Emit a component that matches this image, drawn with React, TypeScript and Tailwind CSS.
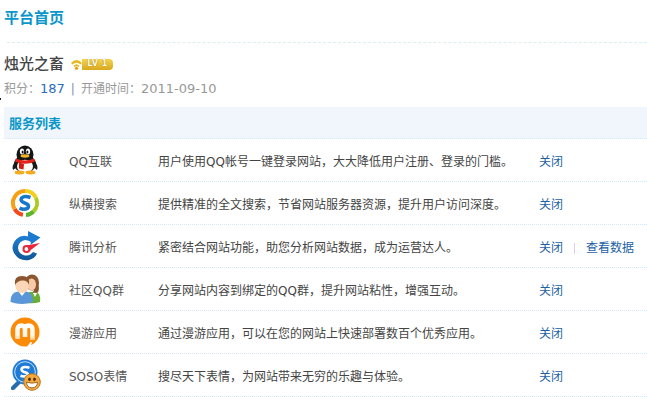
import React from 'react'

const FONT = "font-['DejaVu_Sans','Noto_Sans_CJK_SC',sans-serif]"

function QQIcon() {
  return (
    <svg width="32" height="32" viewBox="0 0 32 32">
      <ellipse cx="16" cy="20" rx="11" ry="9" fill="#1a1a1a" />
      <path d="M6 18 Q2.5 22 4 26 L8 23Z" fill="#1a1a1a" />
      <path d="M26 18 Q29.5 22 28 26 L24 23Z" fill="#1a1a1a" />
      <ellipse cx="16" cy="10.5" rx="8.5" ry="9" fill="#151515" />
      <ellipse cx="16" cy="22.5" rx="8" ry="6.8" fill="#fbfbf8" />
      <ellipse cx="13" cy="7.5" rx="2.1" ry="3" fill="#fff" />
      <ellipse cx="19" cy="7.5" rx="2.1" ry="3" fill="#fff" />
      <ellipse cx="13.6" cy="8" rx="1" ry="1.5" fill="#111" />
      <ellipse cx="18.4" cy="8" rx="1" ry="1.5" fill="#111" />
      <ellipse cx="16" cy="12" rx="4.4" ry="1.7" fill="#f4b41e" />
      <path d="M7 14.5 Q16 18.5 25 14.5 L26 17.5 Q16 22 6 17.5Z" fill="#e2231a" />
      <path d="M10 18.5 L15 20 L14.5 25.5 L10 24.5Z" fill="#d41c14" />
      <ellipse cx="10.5" cy="28.5" rx="5" ry="1.9" fill="#f5a91d" />
      <ellipse cx="21.5" cy="28.5" rx="5" ry="1.9" fill="#f5a91d" />
    </svg>
  )
}

function SearchIcon() {
  return (
    <svg width="32" height="32" viewBox="0 0 32 32" fill="none">
      <circle cx="16" cy="16" r="13.7" fill="#fff" />
      <path d="M16 4 A12 12 0 0 1 27 11" stroke="#f2cf1e" strokeWidth="4" />
      <path d="M27 11 A12 12 0 0 1 24.5 24.5" stroke="#a9cc22" strokeWidth="4" />
      <path d="M24.5 24.5 A12 12 0 0 1 17 28" stroke="#5bb52a" strokeWidth="4" />
      <path d="M14 27.8 A12 12 0 0 1 5.6 22" stroke="#ef4a1c" strokeWidth="4" />
      <path d="M5.6 22 A12 12 0 0 1 16 4" stroke="#f7a014" strokeWidth="4" />
      <path d="M21.5 10.5 Q15.5 8.5 12.8 10.8 Q10.8 13.3 14 15.2 L18 17 Q20.8 19 18.4 21.4 Q15 23.3 10.5 21.2" stroke="#1778c9" strokeWidth="3.6" />
    </svg>
  )
}

function AnalyticsIcon() {
  return (
    <svg width="32" height="32" viewBox="0 0 32 32" fill="none">
      <defs>
        <linearGradient id="analytics-c" x1="0" y1="0" x2="0" y2="1">
          <stop offset="0" stopColor="#1f7fd4" />
          <stop offset="1" stopColor="#0f5797" />
        </linearGradient>
      </defs>
      <path d="M22 8 Q14 3 7.5 9 Q1 16 5 23 Q10 31.5 20 30 Q26 28.5 28 23.5 L24 22 Q21 26 16 25.5 Q9.5 24 9 18 Q9.5 11 16 10 Q19 10 22 12Z" fill="url(#analytics-c)" />
      <path d="M19 1 L31.5 7.5 L21.5 15 L22 11 L19 7Z" fill="#1c7bd0" />
      <circle cx="17.5" cy="19" r="3" stroke="#e8283c" strokeWidth="2" />
      <path d="M17.5 15.5 L31 13 L20.5 21Z" fill="#e8283c" />
      <circle cx="17.5" cy="19" r="1.3" fill="#fff" />
    </svg>
  )
}

function GroupIcon() {
  return (
    <svg width="32" height="32" viewBox="0 0 32 32">
      <path d="M18 30 L18 20 Q25 17 30 21 Q32 25 31 29 Q25 31 18 30Z" fill="#6aae36" />
      <path d="M24 20 L26 24 L28 20Z" fill="#fff" />
      <ellipse cx="23" cy="9.5" rx="7" ry="8" fill="#8c5631" />
      <path d="M29 10 Q31 16 28.5 20 L24 19Z" fill="#8c5631" />
      <ellipse cx="22.5" cy="11.5" rx="4.5" ry="6" fill="#f7cba8" />
      <path d="M1.5 29 Q1 20 9 18.5 L17 18.5 Q24.5 20 24 29 Q13 33 1.5 29Z" fill="#5a96d8" />
      <path d="M9 18 L13 23 L17 18Z" fill="#fff" />
      <ellipse cx="13" cy="12" rx="6.8" ry="8" fill="#fcd6b6" />
      <path d="M6 12 Q4.5 3 13 3 Q21.5 3 20 12 Q18.5 7 13.5 7.5 Q8.5 7.5 6 12Z" fill="#8a5530" />
    </svg>
  )
}

function RoamIcon() {
  return (
    <svg width="32" height="32" viewBox="0 0 32 32" fill="none">
      <defs>
        <linearGradient id="roam-m" x1="0" y1="0" x2="0" y2="1">
          <stop offset="0" stopColor="#ffffff" />
          <stop offset="0.7" stopColor="#fff4e4" />
          <stop offset="1" stopColor="#ffc987" />
        </linearGradient>
      </defs>
      <circle cx="16" cy="16" r="14.5" fill="#fb8a06" />
      <path d="M8.5 23 L8.5 14 Q8.5 9.5 12.5 9.5 Q16 9.5 16 13.5 L16 21 M16 13.5 Q16 9.5 19.5 9.5 Q23.5 9.5 23.5 14 L23.5 24" stroke="url(#roam-m)" strokeWidth="4.6" />
      <path d="M18.5 30 L21.5 26 L23 26 L22 30Z" fill="#fff" />
    </svg>
  )
}

function SosoIcon() {
  return (
    <svg width="32" height="32" viewBox="0 0 32 32" fill="none">
      <path d="M9 21 L2.5 27.5 Q1 30 3 31 Q5 31.5 6.5 29.5 L12 24Z" fill="#2a6aa8" />
      <circle cx="16" cy="13" r="12.5" fill="#1f7bd6" />
      <circle cx="16" cy="13" r="10.3" stroke="#c4e2fa" strokeWidth="1" />
      <path d="M20.5 8.8 Q15.5 7 13 9 Q11.5 11.3 14.5 12.7 L18 14 Q20 15.5 17.5 17 Q15 18 11.5 16.7" stroke="#fff" strokeWidth="2.6" />
      <circle cx="23" cy="23" r="8.3" fill="#f3a93e" stroke="#b5741b" strokeWidth="1" />
      <ellipse cx="20.5" cy="20.3" rx="1.3" ry="1.8" fill="#4a2c0a" />
      <ellipse cx="25.5" cy="20.3" rx="1.3" ry="1.8" fill="#4a2c0a" />
      <path d="M17.5 23.3 Q23 25 28.5 23.3 Q28 28.8 23 28.8 Q18 28.8 17.5 23.3Z" fill="#fff" stroke="#7a4a10" strokeWidth="0.7" />
    </svg>
  )
}

function LevelBadge() {
  return (
    <span className="ml-[7px] inline-flex h-[11px] items-center">
      <svg width="11" height="11" viewBox="0 0 11 11" className="shrink-0">
        <path d="M0 4 Q5.5 -2 11 4 L9.5 5.5 Q5.5 1.8 1.5 5.5Z" fill="#e8b820" />
        <path d="M2.5 6.8 Q5.5 3.8 8.5 6.8 L7.5 8 Q5.5 6.4 3.5 8Z" fill="#e8b820" />
        <circle cx="5.5" cy="9.3" r="1.6" fill="#e8a010" />
      </svg>
      <span className="flex h-[11px] w-[31px] items-center justify-center rounded-r-sm bg-gradient-to-b from-[#f4d54d] to-[#d9a81c] text-[8px] font-bold leading-none tracking-[0.5px] text-[#fffbe6] [text-shadow:0_0_1px_#7a5a00]">
        LV 1
      </span>
    </span>
  )
}

const services = [
  { icon: <QQIcon />, name: 'QQ互联', desc: '用户使用QQ帐号一键登录网站，大大降低用户注册、登录的门槛。' },
  { icon: <SearchIcon />, name: '纵横搜索', desc: '提供精准的全文搜索，节省网站服务器资源，提升用户访问深度。' },
  { icon: <AnalyticsIcon />, name: '腾讯分析', desc: '紧密结合网站功能，助您分析网站数据，成为运营达人。', extra: '查看数据' },
  { icon: <GroupIcon />, name: '社区QQ群', desc: '分享网站内容到绑定的QQ群，提升网站粘性，增强互动。' },
  { icon: <RoamIcon />, name: '漫游应用', desc: '通过漫游应用，可以在您的网站上快速部署数百个优秀应用。' },
  { icon: <SosoIcon />, name: 'SOSO表情', desc: '搜尽天下表情，为网站带来无穷的乐趣与体验。' },
]

export default function App() {
  return (
    <div className={`relative h-[418px] w-[647px] overflow-hidden bg-white text-xs text-[#555] ${FONT}`}>
      {/* Title */}
      <div className="pl-1 pt-[8px]">
        <h1 className="h-[34px] text-[15px] font-bold leading-[20px] text-[#0a96c8]">平台首页</h1>
        <div className="ml-[3px] border-t border-dashed border-[#dcedf7]" />
      </div>

      {/* Account */}
      <div className="pl-1 pt-[11px]">
        <div className="flex h-[20px] items-center">
          <span className="text-[15px] font-medium leading-[20px] text-[#444]">烛光之畜</span>
          <LevelBadge />
        </div>
        <div className="mt-[6px] h-[18px] leading-[18px] text-[#999]">
          积分：<span className="text-[13px] text-[#2b6cb8]">187</span>
          <span className="mx-[6px] text-[#7a8fb0]">|</span>
          开通时间：<span className="text-[13px]">2011-09-10</span>
        </div>
      </div>

      {/* Services */}
      <div className="ml-1 mt-[9px]">
        <div className="h-[32px] border-b border-dotted border-[#d5e8f5] bg-[#f1f6fc] pl-[5px] text-[13px] font-bold leading-[33px] text-[#0a96c8]">
          服务列表
        </div>
        {services.map((s) => (
          <div key={s.name} className="flex h-[43px] items-center border-b border-dotted border-[#d5e8f5]">
            <div className="ml-[5px] flex w-[32px] justify-center">{s.icon}</div>
            <div className="ml-[28px] w-[89px] pt-[4px] text-[#555]">{s.name}</div>
            <div className="w-[381px] pt-[4px] text-[#444]">{s.desc}</div>
            <div className="flex items-center pt-[4px] text-[#1d5fa3]">
              <span>关闭</span>
              {s.extra && (
                <>
                  <span className="mx-[11px] h-[11px] w-px bg-[#d8cfe0]" />
                  <span>{s.extra}</span>
                </>
              )}
            </div>
          </div>
        ))}
      </div>

      <span className="absolute left-0 top-[98px] h-[2px] w-px bg-[#223]" />
    </div>
  )
}
